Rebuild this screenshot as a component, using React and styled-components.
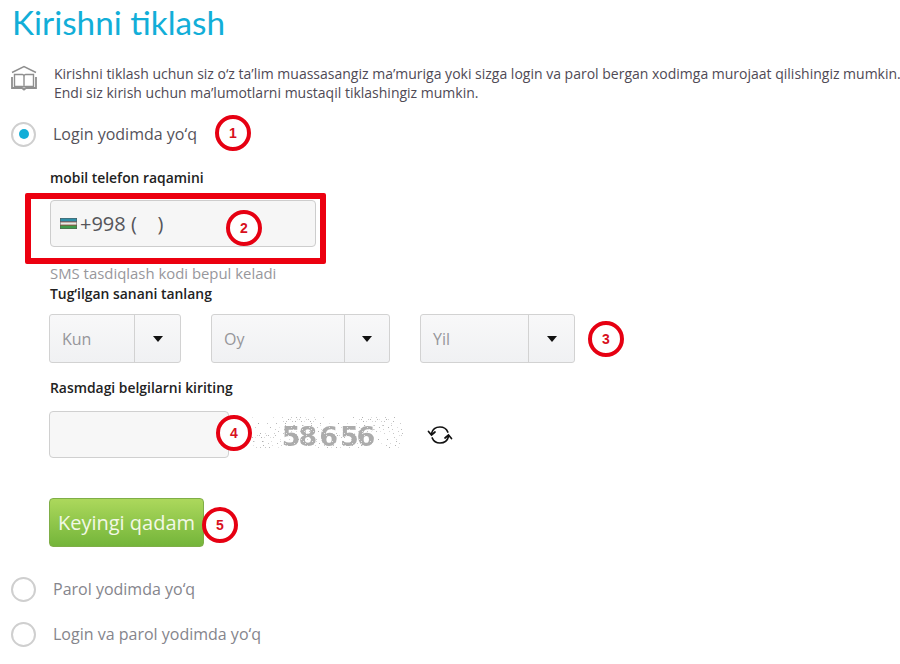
import React from "react";
import styled, { createGlobalStyle } from "styled-components";

const Global = createGlobalStyle`
  html, body { margin: 0; padding: 0; background: #fff; }
  body { font-family: "Open Sans", "Liberation Sans", sans-serif; overflow: hidden; }
`;

const Page = styled.div`
  width: 900px;
  height: 664px;
  overflow: hidden;
  padding: 0 0 0 12px;
  box-sizing: border-box;
`;

const Title = styled.h1`
  margin: 0;
  padding-top: 2px;
  height: 46px;
  font-family: "Lato", "Open Sans", sans-serif;
  font-weight: 400;
  font-size: 33.3px;
  line-height: 40px;
  color: #12aed8;
`;

const Intro = styled.div`
  display: flex;
  gap: 17px;
  margin-top: 16px;
  width: 900px;
`;

const BookIcon = styled.svg`
  width: 26px;
  height: 26px;
  flex: none;
  margin: 1px 0 0 -1px;
`;

const IntroText = styled.p`
  margin: 0;
  font-size: 14px;
  line-height: 19px;
  color: #4f4a55;
  white-space: nowrap;
`;

const RadioRow = styled.div`
  display: flex;
  align-items: center;
  gap: 17px;
  height: 26px;
  margin-top: ${(p) => p.$top}px;
`;

const RadioCircle = styled.span`
  position: relative;
  width: 25px;
  height: 25px;
  margin-left: -1px;
  box-sizing: border-box;
  border: 2px solid #cfcfcf;
  border-radius: 50%;
  background: #fff;
  flex: none;
  display: flex;
  align-items: center;
  justify-content: center;
  &::after {
    content: "";
    display: ${(p) => (p.$checked ? "block" : "none")};
    width: 10px;
    height: 10px;
    border-radius: 50%;
    background: #12aed8;
  }
`;

const RadioLabel = styled.span`
  font-size: 16px;
  line-height: 26px;
  color: ${(p) => (p.$active ? "#55525a" : "#85858c")};
  white-space: nowrap;
`;

const Form = styled.div`
  padding-left: 38px;
`;

const FieldLabel = styled.div`
  font-size: 13.9px;
  font-weight: 600;
  line-height: 18px;
  color: #222;
  margin-top: ${(p) => p.$top || 0}px;
`;

const PhoneWrap = styled.div`
  position: relative;
  width: 266px;
  margin-top: 13px;
`;

const RedFrame = styled.div`
  position: absolute;
  left: -25px;
  top: -7px;
  width: 301px;
  height: 71px;
  box-sizing: border-box;
  border: 6px solid #ec0010;
  border-radius: 2px;
`;

const PhoneBox = styled.div`
  height: 47px;
  box-sizing: border-box;
  display: flex;
  align-items: center;
  gap: 3px;
  padding: 0 0 0 9px;
  background: #f6f6f6;
  border: 1px solid #cdcdcd;
  border-radius: 4px;
  font-size: 20px;
  color: #55555a;
  white-space: pre;
`;

const Hint = styled.div`
  margin-top: 17px;
  font-size: 14.9px;
  line-height: 18px;
  color: #97979c;
`;

const SelectRow = styled.div`
  display: flex;
  align-items: center;
  margin-top: 11px;
  margin-left: -1px;
`;

const Select = styled.div`
  display: flex;
  width: ${(p) => p.$w}px;
  height: 49px;
  margin-right: ${(p) => p.$gap}px;
  box-sizing: border-box;
  background: linear-gradient(#f8f8f9, #f0f1f3);
  border: 1px solid #d2d2d2;
  border-radius: 3px;
`;

const SelectText = styled.span`
  flex: 1;
  padding-left: 12px;
  font-size: 16px;
  line-height: 49px;
  color: #96969a;
`;

const SelectArrow = styled.span`
  width: ${(p) => p.$w}px;
  border-left: 1px solid #d2d2d2;
  display: flex;
  align-items: center;
  justify-content: center;
  &::after {
    content: "";
    border-left: 5.5px solid transparent;
    border-right: 5.5px solid transparent;
    border-top: 6px solid #111;
  }
`;

const CaptchaRow = styled.div`
  display: flex;
  align-items: center;
  margin-top: 14px;
  margin-left: -1px;
`;

const CaptchaInput = styled.div`
  position: relative;
  width: 180px;
  height: 47px;
  box-sizing: border-box;
  background: #f7f7f7;
  border: 1px solid #d0d0d0;
  border-radius: 4px;
`;

const Captcha = styled.div`
  position: relative;
  width: 151px;
  height: 32px;
  margin: -4px 0 0 23px;
  display: flex;
  align-items: center;
  justify-content: center;
`;

const CaptchaNoise = styled.svg`
  position: absolute;
  inset: 0;
  width: 100%;
  height: 100%;
`;

const CaptchaDigits = styled.span`
  position: relative;
  top: 4px;
  font-family: "DejaVu Sans", sans-serif;
  font-weight: 700;
  font-size: 27px;
  letter-spacing: -2.2px;
  word-spacing: -3px;
  color: #acacac;
  filter: blur(0.4px);
`;

const RefreshIcon = styled.svg`
  width: 26px;
  height: 26px;
  margin: 0 0 0 24px;
`;

const NextWrap = styled.div`
  position: relative;
  width: 155px;
  margin: 40px 0 0 -1px;
`;

const NextButton = styled.button`
  display: block;
  width: 155px;
  height: 49px;
  padding: 0;
  background: linear-gradient(#acd85c, #74b53a);
  border: 1px solid #7fae47;
  border-radius: 4px;
  font-family: inherit;
  font-size: 20px;
  color: #f2f8e6;
`;

const Marker = styled.span`
  position: absolute;
  left: ${(p) => p.$x}px;
  top: ${(p) => p.$y}px;
  width: 36px;
  height: 36px;
  box-sizing: border-box;
  border: 4px solid #e60012;
  border-radius: 50%;
  background: #fff;
  display: flex;
  align-items: center;
  justify-content: center;
  font-family: "Liberation Sans", sans-serif;
  font-weight: 700;
  font-size: 14px;
  color: #d81020;
`;

const RadioLine = styled.div`
  position: relative;
`;

const SelectMarkerSlot = styled.div`
  position: relative;
  width: 36px;
  height: 36px;
  margin-left: -1px;
`;

const noiseDots = Array.from({ length: 230 }, (_, i) => {
  const a = (i * 73) % 151;
  const b = (i * i * 17 + i * 5) % 32;
  return { x: a, y: b, o: 0.25 + ((i * 7) % 10) / 20 };
});

const specks = Array.from({ length: 110 }, (_, i) => ({
  x: 28 + ((i * 41) % 96),
  y: 8 + ((i * i * 11 + i * 3) % 22),
}));

const App = () => {
  return (
    <Page>
      <Global />
      <Title>Kirishni tiklash</Title>
      <Intro>
        <BookIcon viewBox="0 0 26 26" fill="none" stroke="#8f8f8f" strokeWidth="1.4">
          <path d="M1 7.5 13 1.5l12 6" />
          <path d="M3.5 9.5h8c1 0 1.500.8 1.500 1.800 0-1 .5-1.800 1.500-1.800h8v12h-8c-1 0-1.500.4-1.500 1-0-.6-.5-1-1.500-1h-8z" />
          <path d="M13 11v11" />
          <path d="M1 12v11h10l2 1.500 2-1.500h10V12" strokeWidth="1.800" />
        </BookIcon>
        <IntroText>
          Kirishni tiklash uchun siz o‘z ta’lim muassasangiz ma’muriga yoki sizga login va parol bergan xodimga murojaat qilishingiz mumkin.
          <br />
          Endi siz kirish uchun ma’lumotlarni mustaqil tiklashingiz mumkin.
        </IntroText>
      </Intro>
      <RadioLine>
        <RadioRow $top={19}>
          <RadioCircle $checked />
          <RadioLabel $active>Login yodimda yo‘q</RadioLabel>
        </RadioRow>
        <Marker $x={203} $y={-6}>1</Marker>
      </RadioLine>
      <Form>
        <FieldLabel $top={22}>mobil telefon raqamini</FieldLabel>
        <PhoneWrap>
          <RedFrame />
          <PhoneBox>
            <svg width="17" height="11" viewBox="0 0 17 11">
              <rect width="17" height="11" fill="#555" />
              <rect x=".5" y=".5" width="16" height="3.200" fill="#2f8fa8" />
              <rect x=".5" y="4.200" width="16" height="2.600" fill="#e6ece6" />
              <rect x=".5" y="7.300" width="16" height="3.200" fill="#3f9a4a" />
              <rect x=".5" y="3.700" width="16" height=".5" fill="#c0392b" />
              <rect x=".5" y="6.800" width="16" height=".5" fill="#c0392b" />
            </svg>
            <span>+998 (    )</span>
          </PhoneBox>
          <Marker $x={176} $y={10}>2</Marker>
        </PhoneWrap>
        <Hint>SMS tasdiqlash kodi bepul keladi</Hint>
        <FieldLabel $top={3}>Tug‘ilgan sanani tanlang</FieldLabel>
        <SelectRow>
          <Select $w={132} $gap={30}>
            <SelectText>Kun</SelectText>
            <SelectArrow $w={45} />
          </Select>
          <Select $w={179} $gap={30}>
            <SelectText>Oy</SelectText>
            <SelectArrow $w={44} />
          </Select>
          <Select $w={155} $gap={14}>
            <SelectText>Yil</SelectText>
            <SelectArrow $w={45} />
          </Select>
          <SelectMarkerSlot>
            <Marker $x={0} $y={0}>3</Marker>
          </SelectMarkerSlot>
        </SelectRow>
        <FieldLabel $top={16}>Rasmdagi belgilarni kiriting</FieldLabel>
        <CaptchaRow>
          <CaptchaInput>
            <Marker $x={166} $y={3}>4</Marker>
          </CaptchaInput>
          <Captcha>
            <CaptchaNoise viewBox="0 0 151 32">
              {noiseDots.map((d, i) => (
                <rect key={i} x={d.x} y={d.y} width="1" height="1" fill="#8f8f8f" opacity={d.o} />
              ))}
            </CaptchaNoise>
            <CaptchaDigits>58 6 56</CaptchaDigits>
            <CaptchaNoise viewBox="0 0 151 32">
              {specks.map((d, i) => (
                <rect key={i} x={d.x} y={d.y} width="1" height="1" fill="#fff" opacity="0.7" />
              ))}
            </CaptchaNoise>
          </Captcha>
          <RefreshIcon viewBox="0 0 26 26" fill="none" stroke="#111" strokeWidth="1.700" strokeLinecap="round">
            <path d="M4.500 11.500C5.500 7.500 9 5 13 5c3.500 0 6.500 2 7.800 5" />
            <path d="M21.500 14.500C20.500 18.500 17 21 13 21c-3.500 0-6.500-2-7.800-5" />
            <path d="M1.500 9.500l3 3.500 3.500-3" />
            <path d="M24.500 16.500l-3-3.500-3.500 3" />
          </RefreshIcon>
        </CaptchaRow>
        <NextWrap>
          <NextButton>Keyingi qadam</NextButton>
          <Marker $x={153} $y={9}>5</Marker>
        </NextWrap>
      </Form>
      <RadioRow $top={29}>
        <RadioCircle />
        <RadioLabel>Parol yodimda yo‘q</RadioLabel>
      </RadioRow>
      <RadioRow $top={19}>
        <RadioCircle />
        <RadioLabel>Login va parol yodimda yo‘q</RadioLabel>
      </RadioRow>
    </Page>
  );
};

export default App;
